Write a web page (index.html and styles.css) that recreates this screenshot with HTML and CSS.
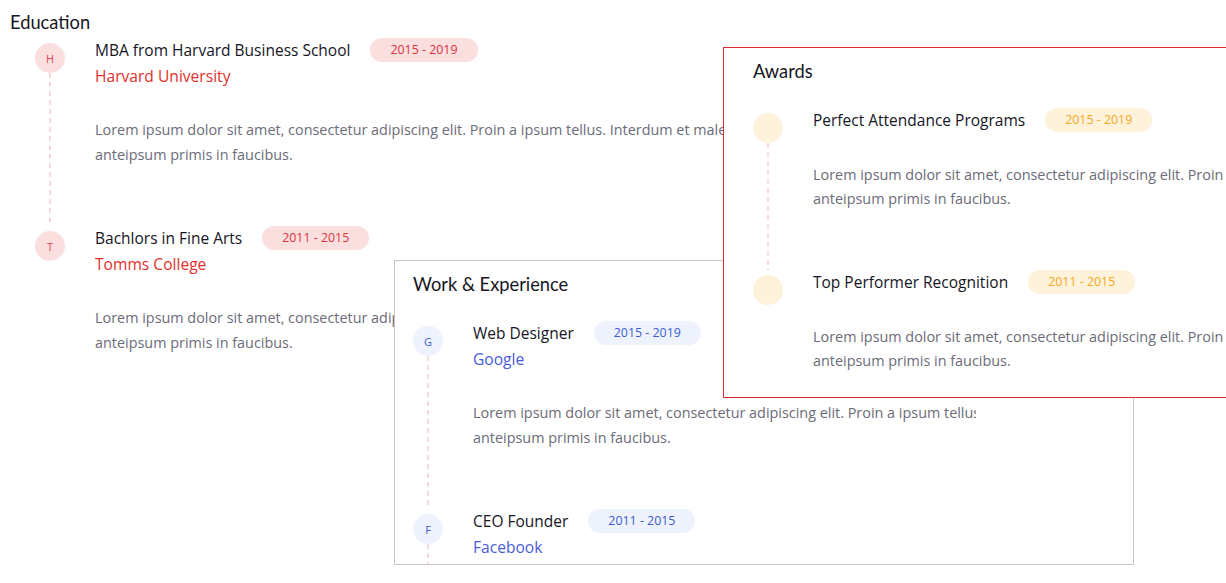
FILE: index.html
```html
<!DOCTYPE html>
<html lang="en">
<head>
<meta charset="utf-8">
<title>Resume timeline</title>
<link rel="stylesheet" href="styles.css">
</head>
<body>
<section class="section edu">
  <h2 class="section-title">Education</h2>
  <div class="timeline">
    <div class="item">
      <div class="rail"><span class="dot">H</span><span class="line"></span></div>
      <div class="body">
        <div class="head"><h3 class="title">MBA from Harvard Business School</h3><span class="badge">2015 - 2019</span></div>
        <div class="sub">Harvard University</div>
        <p class="text">Lorem ipsum dolor sit amet, consectetur adipiscing elit. Proin a ipsum tellus. Interdum et malesuada fames ac<br>anteipsum primis in faucibus.</p>
      </div>
    </div>
    <div class="item">
      <div class="rail"><span class="dot">T</span></div>
      <div class="body">
        <div class="head"><h3 class="title">Bachlors in Fine Arts</h3><span class="badge">2011 - 2015</span></div>
        <div class="sub">Tomms College</div>
        <p class="text">Lorem ipsum dolor sit amet, consectetur adipiscing elit. Proin a ipsum tellus. Interdum et malesuada fames ac<br>anteipsum primis in faucibus.</p>
      </div>
    </div>
  </div>
</section>

<section class="section panel work">
  <h2 class="section-title">Work &amp; Experience</h2>
  <div class="timeline clip">
    <div class="item">
      <div class="rail"><span class="dot">G</span><span class="line"></span></div>
      <div class="body">
        <div class="head"><h3 class="title">Web Designer</h3><span class="badge">2015 - 2019</span></div>
        <div class="sub">Google</div>
        <p class="text">Lorem ipsum dolor sit amet, consectetur adipiscing elit. Proin a ipsum tellus. Interdum et malesuada fames ac<br>anteipsum primis in faucibus.</p>
      </div>
    </div>
    <div class="item">
      <div class="rail"><span class="dot">F</span><span class="line"></span></div>
      <div class="body">
        <div class="head"><h3 class="title">CEO Founder</h3><span class="badge">2011 - 2015</span></div>
        <div class="sub">Facebook</div>
        <p class="text">Lorem ipsum dolor sit amet, consectetur adipiscing elit. Proin a ipsum tellus. Interdum et malesuada fames ac<br>anteipsum primis in faucibus.</p>
      </div>
    </div>
  </div>
</section>

<section class="section panel awards">
  <h2 class="section-title">Awards</h2>
  <div class="timeline">
    <div class="item">
      <div class="rail"><span class="dot"></span><span class="line"></span></div>
      <div class="body">
        <div class="head"><h3 class="title">Perfect Attendance Programs</h3><span class="badge">2015 - 2019</span></div>
        <p class="text">Lorem ipsum dolor sit amet, consectetur adipiscing elit. Proin a ipsum tellus. Interdum et malesuada fames ac<br>anteipsum primis in faucibus.</p>
      </div>
    </div>
    <div class="item">
      <div class="rail"><span class="dot"></span></div>
      <div class="body">
        <div class="head"><h3 class="title">Top Performer Recognition</h3><span class="badge">2011 - 2015</span></div>
        <p class="text">Lorem ipsum dolor sit amet, consectetur adipiscing elit. Proin a ipsum tellus. Interdum et malesuada fames ac<br>anteipsum primis in faucibus.</p>
      </div>
    </div>
  </div>
</section>
</body>
</html>
```

FILE: styles.css
```css
* { box-sizing: border-box; }

html, body {
  margin: 0;
  padding: 0;
  width: 1226px;
  height: 583px;
  overflow: hidden;
  background: #ffffff;
}

body {
  position: relative;
  font-family: "Open Sans", "Lato", sans-serif;
  color: #1c1c2b;
}

.section-title {
  margin: 0;
  font-family: "Lato", "Open Sans", sans-serif;
  font-size: 18.3px;
  line-height: 24px;
  font-weight: 400;
  color: #161624;
}

.edu {
  padding: 10px 10px;
}

.edu .section-title {
  margin-bottom: 4px;
}

.edu .timeline {
  padding-left: 25px;
}

.item {
  display: flex;
  gap: 30px;
  padding-bottom: 59px;
}

.rail {
  width: 30px;
  flex: 0 0 30px;
  display: flex;
  flex-direction: column;
  align-items: center;
}

.dot {
  margin-top: 5px;
  width: 30px;
  height: 30px;
  border-radius: 50%;
  display: flex;
  align-items: center;
  justify-content: center;
  font-size: 11px;
  background: #fbdfdf;
  color: #e0484f;
}

.line {
  flex: 1;
  width: 2px;
  margin-bottom: -59px;
  background: repeating-linear-gradient(to bottom, #f9d9da 0 5px, transparent 5px 9px);
}

.body {
  flex: 1;
  min-width: 0;
}

.head {
  display: flex;
  align-items: center;
  height: 24px;
  gap: 20px;
}

.title {
  margin: 0;
  font-size: 15.5px;
  font-weight: 400;
  color: #15151f;
  white-space: nowrap;
}

.badge {
  height: 24px;
  line-height: 24px;
  padding: 0 20px;
  border-radius: 12px;
  font-size: 12.4px;
  background: #fbdfdf;
  color: #d8323a;
  white-space: nowrap;
}

.sub {
  margin-top: 1px;
  font-size: 15.6px;
  line-height: 26px;
  color: #df2f2a;
}

.text {
  margin: 29px 0 0;
  font-size: 14.4px;
  line-height: 24.5px;
  color: #6b6b79;
  white-space: nowrap;
}

.panel {
  position: absolute;
  background: #ffffff;
  overflow: hidden;
}

.panel .section-title {
  margin-bottom: 25px;
}

.work {
  left: 394px;
  top: 260px;
  width: 740px;
  height: 305px;
  padding: 11px 18px;
  border: 1px solid #c6c6c6;
  z-index: 1;
}

.work .clip {
  width: 563px;
  overflow: hidden;
}

.work .dot,
.work .badge {
  background: #edf2fc;
  color: #3b5bd0;
}

.work .sub {
  color: #4a5bd8;
}

.awards {
  left: 723px;
  top: 47px;
  width: 560px;
  height: 351px;
  padding: 11px 29px;
  border: 1px solid #dc2a2f;
  z-index: 2;
}

.awards .dot,
.awards .badge {
  background: #fef2da;
  color: #f5a623;
}

.awards .text {
  margin-top: 31px;
  line-height: 24px;
}
```
